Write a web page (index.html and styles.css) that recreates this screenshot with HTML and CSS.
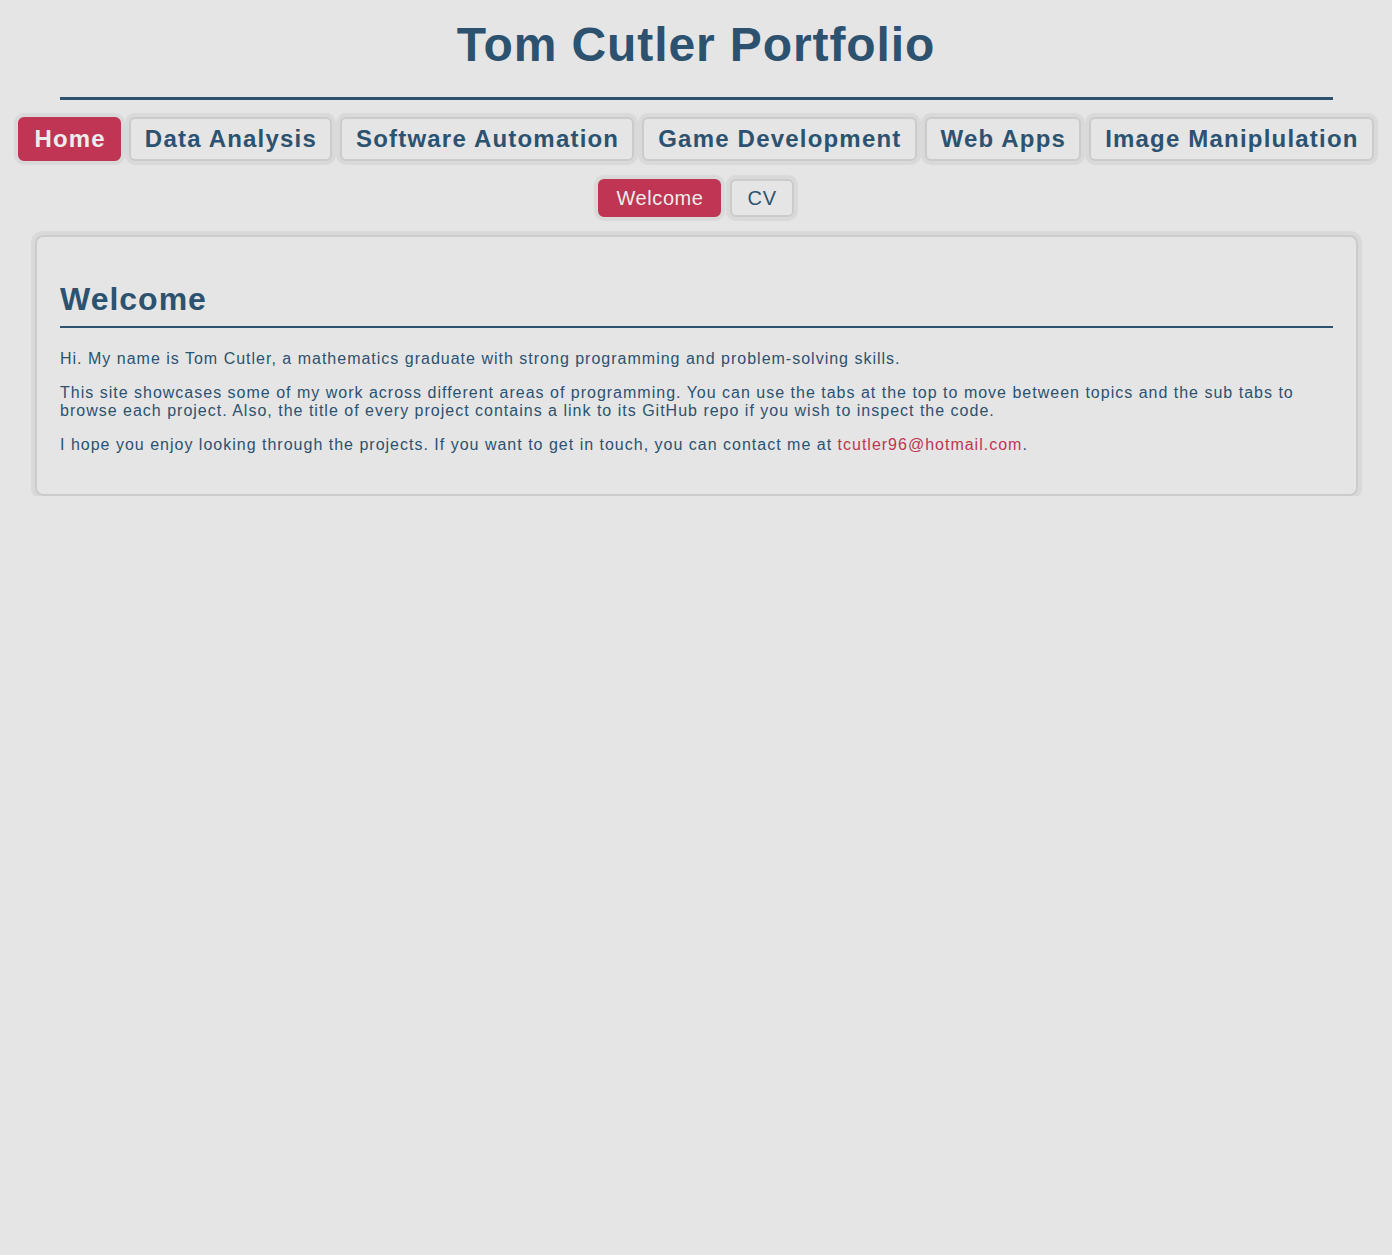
FILE: index.html
```html
<!DOCTYPE html>
<html lang="en">
<head>
    <meta charset="UTF-8">
    <meta name="viewport" content="width=device-width, initial-scale=1.0">
    <title>Tom Cutler Portfolio</title>
    <link rel="stylesheet" href="styles.css">
</head>
<body>
    <header class="header">
        <h1>Tom Cutler Portfolio</h1>
        <hr class="header-rule">
    </header>

    <nav class="tabs">
        <button class="tab active">Home</button>
        <button class="tab">Data Analysis</button>
        <button class="tab">Software Automation</button>
        <button class="tab">Game Development</button>
        <button class="tab">Web Apps</button>
        <button class="tab">Image Maniplulation</button>
    </nav>

    <nav class="sub-tabs">
        <button class="sub-tab active">Welcome</button>
        <button class="sub-tab">CV</button>
    </nav>

    <main class="card">
        <h2>Welcome</h2>
        <p>Hi. My name is Tom Cutler, a mathematics graduate with strong programming and problem-solving skills.</p>
        <p>This site showcases some of my work across different areas of programming. You can use the tabs at the top to move between topics and the sub tabs to browse each project. Also, the title of every project contains a link to its GitHub repo if you wish to inspect the code.</p>
        <p>I hope you enjoy looking through the projects. If you want to get in touch, you can contact me at <a href="mailto:tcutler96@hotmail.com">tcutler96@hotmail.com</a>.</p>
    </main>
</body>
</html>
```

FILE: styles.css
```css
body {
    margin: 0;
    padding: 0;
    background-color: #e5e5e5;
    color: #2c5270;
    font-family: "Liberation Sans", Arial, sans-serif;
}
.header h1 {
    margin: 17px 0 0;
    text-align: center;
    font-size: 48px;
    letter-spacing: 0.9px;
}
.header-rule {
    margin: 25px 59px 0 60px;
    height: 3px;
    border: none;
    background-color: #2c5270;
}
.tabs,
.sub-tabs {
    display: flex;
    justify-content: center;
}
.tabs {
    gap: 8px;
    margin-top: 17px;
}
.sub-tabs {
    gap: 9px;
    margin-top: 18px;
}
.tab,
.sub-tab {
    font-family: inherit;
    color: #2c5270;
    background-color: #e5e5e5;
    border: 2px solid #cbcbcb;
    border-radius: 6px;
    box-shadow: 0 0 1px 4px #d9d9d9;
    cursor: pointer;
}
.tab {
    padding: 6px 13px 6px 14px;
    font-size: 24px;
    font-weight: bold;
    letter-spacing: 1.2px;
    line-height: normal;
}
.sub-tab {
    padding: 5px 15px 5px 16px;
    font-size: 20px;
    line-height: 24px;
    letter-spacing: 0.6px;
}
.tab.active,
.sub-tab.active {
    background-color: #bf3553;
    border-color: #bf3553;
    color: #ececec;
}
.card {
    display: block;
    margin: 18px 34px 0 35px;
    padding: 23px 23px 24px;
    border: 2px solid #cbcbcb;
    border-radius: 8px;
    box-shadow: 0 0 1px 4px #d9d9d9;
}
.card h2 {
    margin: 21px 0 22px;
    padding-bottom: 8px;
    font-size: 32px;
    letter-spacing: 1px;
    border-bottom: 2px solid #2c5270;
}
.card p {
    margin: 16px 0;
    font-size: 16px;
    letter-spacing: 1px;
}
.card a {
    color: #bf3553;
    text-decoration: none;
}
```
